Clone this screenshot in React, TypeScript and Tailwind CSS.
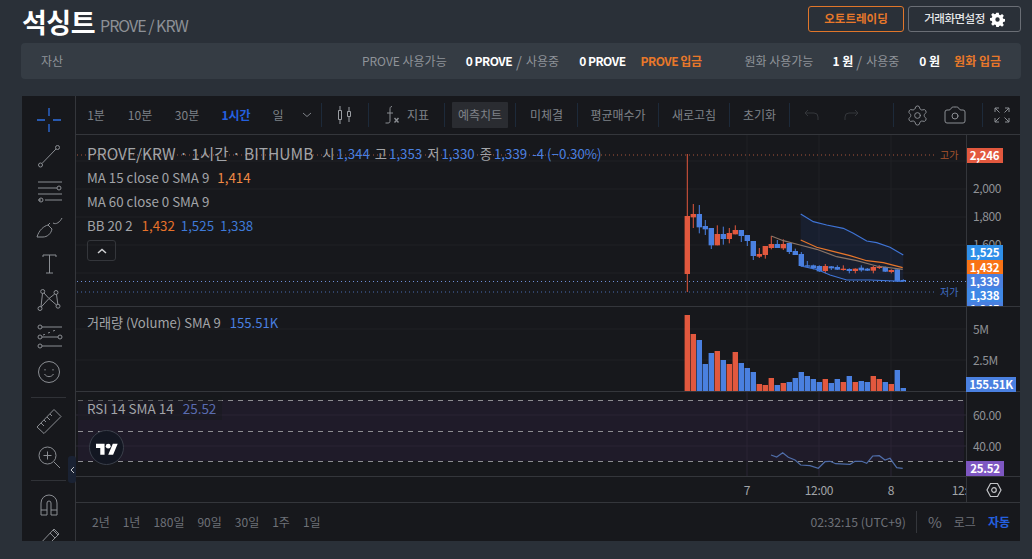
import type { ReactNode } from 'react';
import { Camera, Settings } from 'lucide-react';

const RED = '#e2583e';
const BLUE = '#4a80e0';

// zoomed reference coords -> page coords
const px = (x: number) => x / 3 + 670;
const py = (y: number) => y / 3 + 140;
const vy = (y: number) => y / 3 + 300;

const toPoints = (pts: number[][], fy: (y: number) => number) =>
  pts.map(([x, y]) => `${px(x).toFixed(1)},${fy(y).toFixed(1)}`).join(' ');

// body top, body bottom, wick top, wick bottom, up?
const candles: [number, number, number, number, boolean][] = [
  [228, 402, 42, 456, true],
  [222, 232, 192, 264, true],
  [222, 262, 195, 280, false],
  [258, 268, 240, 285, false],
  [264, 316, 264, 327, false],
  [282, 316, 256, 316, true],
  [282, 297, 260, 314, false],
  [279, 297, 264, 310, true],
  [270, 283, 256, 283, true],
  [270, 288, 270, 306, false],
  [285, 303, 285, 318, false],
  [303, 348, 303, 360, false],
  [342, 350, 324, 354, true],
  [318, 345, 318, 356, true],
  [312, 324, 288, 328, true],
  [312, 324, 300, 324, false],
  [312, 325, 298, 330, true],
  [309, 336, 309, 342, false],
  [333, 345, 326, 345, false],
  [342, 378, 336, 380, false],
  [376, 380, 363, 380, false],
  [376, 384, 374, 388, false],
  [378, 394, 376, 396, false],
  [378, 393, 372, 400, true],
  [379, 385, 378, 390, false],
  [381, 389, 376, 390, false],
  [386, 390, 376, 392, true],
  [387, 393, 385, 400, false],
  [386, 393, 385, 400, true],
  [383, 391, 376, 395, false],
  [386, 392, 384, 393, false],
  [381, 392, 378, 400, true],
  [380, 384, 376, 387, true],
  [381, 395, 380, 396, false],
  [390, 396, 388, 400, true],
  [388, 424, 388, 424, false],
  [420, 424, 418, 425, false],
];

const volumes: [number, boolean][] = [
  [45, true], [102, true], [120, false], [192, false], [159, false], [153, true], [180, false], [192, true],
  [156, true], [189, false], [204, false], [216, false], [252, true], [255, true], [234, true], [255, false],
  [249, true], [246, false], [234, false], [216, false], [228, false], [237, false], [246, false], [237, true],
  [249, false], [237, false], [246, true], [228, false], [246, true], [243, false], [246, false], [228, true],
  [237, true], [246, false], [252, true], [210, false], [264, false],
];

const bbUpper = [[392, 222], [430, 245], [470, 255], [520, 265], [550, 280], [590, 303], [620, 308], [660, 322], [700, 345]];
const bbBasis = [[392, 300], [440, 322], [480, 332], [540, 347], [590, 362], [640, 368], [698, 383]];
const bbLower = [[392, 378], [440, 388], [480, 405], [530, 420], [600, 420], [700, 424]];
const ma15 = [[304, 288], [340, 302], [390, 315], [440, 328], [500, 350], [560, 362], [620, 378], [698, 388]];
const rsi = [
  [303, 465], [320, 471], [338, 458], [355, 472], [375, 480], [392, 495], [420, 497], [445, 505], [465, 485],
  [480, 484], [497, 491], [540, 493], [555, 484], [575, 484], [590, 490], [608, 468], [628, 467], [645, 480],
  [660, 475], [680, 503], [698, 505],
];

const vGrid = [747, 819, 891];

function ToolIcon({ h, children }: { h: number; children: ReactNode }) {
  return (
    <div className="flex items-center justify-center shrink-0" style={{ height: h }}>
      <svg width="32" height="32" viewBox="0 0 32 32" fill="none" stroke="#8b8e93" strokeWidth="1">
        {children}
      </svg>
    </div>
  );
}

function LeftToolbar() {
  return (
    <div className="relative w-[54px] shrink-0 border-r border-[#34363b] flex flex-col pt-[6px] overflow-hidden">
      <ToolIcon h={36}>
        <path d="M4 16h8M20 16h8M16 4v8M16 20v8" stroke="#2f6fe0" strokeWidth="1.3" />
      </ToolIcon>
      <ToolIcon h={35}>
        <circle cx="7.500" cy="25" r="2" />
        <circle cx="24.500" cy="7.500" r="2" />
        <path d="M9 23.500 23 9" />
      </ToolIcon>
      <ToolIcon h={37}>
        <path d="M5 6h24M5 12h19M5 18h24M5 24h3M12 24h17" />
        <circle cx="26" cy="12" r="2" />
        <circle cx="8" cy="24" r="2" />
      </ToolIcon>
      <ToolIcon h={38}>
        <path d="M4 24C6 17 11 13 15 12l4 4c-1 5-5 8-9 8z" />
        <path d="M15 12l2-2M20 10c3 2 7-1 9-5" />
      </ToolIcon>
      <ToolIcon h={36}>
        <path d="M10 5h13M16.500 5v18M13 23h7M10 5v2M23 5v2" />
      </ToolIcon>
      <ToolIcon h={35}>
        <circle cx="9.700" cy="5.500" r="2" />
        <circle cx="23" cy="6.500" r="2" />
        <circle cx="25" cy="20.200" r="2" />
        <circle cx="7" cy="22.500" r="2" />
        <path d="M8 20.500 9.500 7.500M11 7l5 5.500 5.700-4.500M23.500 8.500l1.300 9.700M16 12.500l7.500 6.500M16 12.500l-7.800 8.500" />
      </ToolIcon>
      <ToolIcon h={36}>
        <circle cx="7" cy="6" r="2" />
        <circle cx="7" cy="16" r="2" />
        <circle cx="27" cy="16" r="2" />
        <circle cx="7" cy="25" r="2" />
        <path d="M9 6h20M9 16h16M9 25h20" />
        <path d="M10 14l3-1M15 12l3-1M20 10l3-1" strokeDasharray="2 2" />
      </ToolIcon>
      <ToolIcon h={34}>
        <circle cx="16" cy="16" r="10.500" />
        <path d="M11.500 18c2 3.500 7 3.500 9 0" />
        <path d="M12 13v1.500M20 13v1.500" />
      </ToolIcon>
      <div className="h-[8px] shrink-0" />
      <div className="h-px mx-[9px] bg-[#303237] shrink-0" />
      <div className="h-[6px] shrink-0" />
      <ToolIcon h={35}>
        <path d="M4 21 21 3.500 28 10.500 11 27.500z" />
        <path d="M8 17l3 3M11 14l2 2M14 11l3 3M17 8l2 2" />
      </ToolIcon>
      <ToolIcon h={35}>
        <circle cx="14.500" cy="14.500" r="8.500" />
        <path d="M21 21l6 6M10.500 14.500h8M14.500 10.500v8" />
      </ToolIcon>
      <div className="h-[6px] shrink-0" />
      <div className="h-px mx-[9px] bg-[#303237] shrink-0" />
      <ToolIcon h={48}>
        <path d="M8 26V14a8 8 0 0 1 16 0v12h-6V14a2 2 0 0 0-4 0v12zM8 21h6M18 21h6" />
      </ToolIcon>
      <ToolIcon h={32}>
        <path d="M5 17 21 0l5 5-16 16H5zM9 13l5 5M17 4l5 5M20 1l5 5" />
      </ToolIcon>
    </div>
  );
}

function Sep() {
  return <div className="w-px h-[24px] bg-[#1d2a3a] shrink-0" />;
}

function TopBtn({ w, children, className = '' }: { w: number; children: ReactNode; className?: string }) {
  return (
    <div className={`flex items-center justify-center shrink-0 ${className}`} style={{ width: w }}>
      {children}
    </div>
  );
}

function TopBar() {
  return (
    <div className="h-[39px] shrink-0 border-b border-[#34363b] flex items-center text-[12px] text-[#7f8288]">
      <TopBtn w={40}>1분</TopBtn>
      <TopBtn w={48}>10분</TopBtn>
      <TopBtn w={46}>30분</TopBtn>
      <TopBtn w={52} className="text-[#2460e0] font-bold">1시간</TopBtn>
      <TopBtn w={32}>일</TopBtn>
      <TopBtn w={26}>
        <svg width="10" height="6" viewBox="0 0 10 6" fill="none" stroke="#7f8288"><path d="M1 1l4 3.500L9 1" /></svg>
      </TopBtn>
      <div className="w-[1px]" />
      <Sep />
      <TopBtn w={46}>
        <svg width="18" height="20" viewBox="0 0 18 20" fill="none" stroke="#9a9da2">
          <path d="M2.500 5.500h3v9h-3zM4 1v4.500M4 14.500V19M11.500 6.500h3v5h-3zM13 2v4.500M13 11.500V17" />
        </svg>
      </TopBtn>
      <Sep />
      <TopBtn w={75}>
        <svg width="17" height="20" viewBox="0 0 17 20" fill="none" stroke="#8b8e93" className="mr-[6px]">
          <path d="M8 1.500C6 1.500 6 3 6 5v10c0 2 0 3-2 3H1.500M3 8h6" />
          <path d="M10.500 13l4 4.500M14.500 13l-4 4.500" strokeWidth="1.400" />
        </svg>
        지표
      </TopBtn>
      <Sep />
      <div className="w-[7px] shrink-0" />
      <div className="w-[56px] h-[26px] shrink-0 bg-[#2a2c31] rounded-[1px] flex items-center justify-center">예측치트</div>
      <div className="w-[7px] shrink-0" />
      <Sep />
      <TopBtn w={61}>미체결</TopBtn>
      <Sep />
      <TopBtn w={80}>평균매수가</TopBtn>
      <Sep />
      <TopBtn w={70}>새로고침</TopBtn>
      <Sep />
      <TopBtn w={59}>초기화</TopBtn>
      <Sep />
      <TopBtn w={43}>
        <svg width="16" height="12" viewBox="0 0 16 12" fill="none" stroke="#34363b"><path d="M4 1 1 4l3 3M1 4h9a4 4 0 0 1 4 4v3" /></svg>
      </TopBtn>
      <TopBtn w={36}>
        <svg width="16" height="12" viewBox="0 0 16 12" fill="none" stroke="#34363b"><path d="m12 1 3 3-3 3M15 4H6a4 4 0 0 0-4 4v3" /></svg>
      </TopBtn>
      <div className="w-[24px] shrink-0" />
      <Sep />
      <TopBtn w={46}>
        <Settings size={23} strokeWidth={1} color="#8b8e93" />
      </TopBtn>
      <TopBtn w={30}>
        <Camera size={24} strokeWidth={1} color="#8b8e93" />
      </TopBtn>
      <div className="w-[12px] shrink-0" />
      <Sep />
      <div className="flex-1 flex items-center justify-center">
        <svg width="16" height="16" viewBox="0 0 16 16" fill="none" stroke="#8b8e93">
          <path d="M1 5V1h4M1 1l4.500 4.500M11 1h4v4M15 1l-4.500 4.500M1 11v4h4M1 15l4.500-4.500M11 15h4v-4M15 15l-4.500-4.500" />
        </svg>
      </div>
    </div>
  );
}

function AxisLabel({ y, children }: { y: number; children: ReactNode }) {
  return (
    <span className="absolute left-[6px] text-[12px] leading-[14px] tracking-[-0.4px] text-[#8f9196]" style={{ top: y - 7 }}>
      {children}
    </span>
  );
}

function Badge({ y, w, bg, children }: { y: number; w: number; bg: string; children: ReactNode }) {
  return (
    <span
      className="absolute left-[-1px] h-[14.500px] flex items-center justify-center text-[11.500px] font-semibold tracking-[-0.3px] text-white"
      style={{ top: y, width: w, background: bg }}
    >
      {children}
    </span>
  );
}

function MainPane() {
  const bandPts = toPoints([...bbUpper, ...[...bbLower].reverse()], py);
  return (
    <div className="h-[172px] shrink-0 flex border-b border-[#34363b]">
      <div className="relative flex-1">
        <svg className="absolute inset-0" width="890" height="172" viewBox="76 135 890 172">
          {[161, 189, 217, 245, 273].map((y) => (
            <line key={y} x1="76" x2="966" y1={y} y2={y} stroke="#202125" />
          ))}
          {vGrid.map((x) => (
            <line key={x} x1={x} x2={x} y1="135" y2="306" stroke="#202125" />
          ))}
          <line x1="77" x2="935" y1="155" y2="155" stroke="#a8553a" strokeDasharray="1 3" />
          <line x1="77" x2="966" y1="281.500" y2="281.500" stroke="#6f8fd8" strokeDasharray="1 3" />
          <line x1="77" x2="935" y1="292" y2="292" stroke="#4a6cb0" strokeDasharray="1 3" />
          <polygon points={bandPts} fill="#1f3a78" fillOpacity="0.22" />
          {candles.map(([t, b, wt, wb, up], i) => {
            const cx = 687.300 + 6 * i;
            const c = up ? RED : BLUE;
            return (
              <g key={i}>
                <line x1={cx} x2={cx} y1={py(wt)} y2={py(wb)} stroke={c} strokeWidth="1" />
                <rect x={cx - 2.700} y={py(t)} width="5.400" height={(b - t) / 3} fill={c} />
              </g>
            );
          })}
          <polyline points={toPoints(bbUpper, py)} fill="none" stroke="#3f74d6" strokeWidth="1.200" />
          <polyline points={toPoints(bbLower, py)} fill="none" stroke="#3f74d6" strokeWidth="1.200" />
          <polyline points={toPoints(ma15, py)} fill="none" stroke="#8a7466" strokeWidth="1.200" />
          <polyline points={toPoints(bbBasis, py)} fill="none" stroke="#e8762a" strokeWidth="1.200" />
        </svg>
        <div className="absolute left-[11px] top-[7px] flex flex-col text-[#a2a4a8] text-[13.300px]">
          <div className="h-[24px] flex items-center whitespace-nowrap">
            <span className="text-[15.500px] mr-[9px]">PROVE/KRW · 1시간 · BITHUMB</span>
            <span>시</span><span className="text-[#4a80e0] ml-[2px] mr-[5px]">1,344</span>
            <span>고</span><span className="text-[#4a80e0] ml-[2px] mr-[5px]">1,353</span>
            <span>저</span><span className="text-[#4a80e0] ml-[2px] mr-[5px]">1,330</span>
            <span>종</span><span className="text-[#4a80e0] ml-[2px] mr-[5px]">1,339</span>
            <span className="text-[#4a80e0]">-4 (−0.30%)</span>
          </div>
          <div className="h-[24px] flex items-center whitespace-nowrap">
            MA 15 close 0 SMA 9<span className="text-[#f08a45] ml-[8px]">1,414</span>
          </div>
          <div className="h-[24px] flex items-center whitespace-nowrap">MA 60 close 0 SMA 9</div>
          <div className="h-[24px] flex items-center whitespace-nowrap">
            BB 20 2<span className="text-[#e8722a] ml-[9px]">1,432</span>
            <span className="text-[#3f7ad8] ml-[6px]">1,525</span>
            <span className="text-[#3f7ad8] ml-[6px]">1,338</span>
          </div>
          <div className="mt-[2px] w-[29px] h-[21px] border border-[#34363b] rounded-[3px] flex items-center justify-center">
            <svg width="10" height="6" viewBox="0 0 10 6" fill="none" stroke="#d0d1d4" strokeWidth="1.500"><path d="M1 5l4-3.500L9 5" /></svg>
          </div>
        </div>
        <span className="absolute left-[864px] top-[13px] text-[10px] leading-[14px] text-[#a8552e]">고가</span>
        <span className="absolute left-[864px] top-[150px] text-[10px] leading-[14px] text-[#3f6fc8]">저가</span>
      </div>
      <div className="relative w-[54px] shrink-0 border-l border-[#34363b] overflow-hidden">
        <AxisLabel y={53}>2,000</AxisLabel>
        <AxisLabel y={81}>1,800</AxisLabel>
        <AxisLabel y={109}>1,600</AxisLabel>
        <Badge y={13} w={37} bg="#e2583e">2,246</Badge>
        <Badge y={110} w={37} bg="#2f8fe8">1,525</Badge>
        <Badge y={125} w={37} bg="#f97316">1,432</Badge>
        <Badge y={139} w={37} bg="#4a80e0">1,339</Badge>
        <Badge y={153} w={37} bg="#3f88e6">1,338</Badge>
        <Badge y={167} w={37} bg="#4a80e0">1,245</Badge>
      </div>
    </div>
  );
}

function VolumePane() {
  return (
    <div className="h-[85px] shrink-0 flex border-b border-[#34363b]">
      <div className="relative flex-1">
        <svg className="absolute inset-0" width="890" height="84" viewBox="76 307 890 84">
          {[329, 360].map((y) => (
            <line key={y} x1="76" x2="966" y1={y} y2={y} stroke="#202125" />
          ))}
          {vGrid.map((x) => (
            <line key={x} x1={x} x2={x} y1="307" y2="391" stroke="#202125" />
          ))}
          {volumes.map(([t, up], i) => (
            <rect key={i} x={687.300 + 6 * i - 2.700} y={vy(t)} width="5.400" height={(273 - t) / 3} fill={up ? RED : BLUE} />
          ))}
        </svg>
        <div className="absolute left-[11px] top-[4px] h-[24px] flex items-center text-[13.100px] text-[#a2a4a8] whitespace-nowrap">
          거래량 (Volume) SMA 9<span className="text-[#4a80e0] ml-[9px]">155.51K</span>
        </div>
      </div>
      <div className="relative w-[54px] shrink-0 border-l border-[#34363b]">
        <AxisLabel y={22}>5M</AxisLabel>
        <AxisLabel y={53}>2.5M</AxisLabel>
        <Badge y={70} w={50} bg="#4a80e0">155.51K</Badge>
      </div>
    </div>
  );
}

function RsiPane() {
  return (
    <div className="h-[85px] shrink-0 flex border-b border-[#34363b]">
      <div className="relative flex-1">
        <svg className="absolute inset-0" width="890" height="84" viewBox="76 392 890 84">
          <rect x="78" y="400" width="886" height="61" fill="#1f1b29" />
          {[415, 446].map((y) => (
            <line key={y} x1="76" x2="966" y1={y} y2={y} stroke="#2a2535" />
          ))}
          {vGrid.map((x) => (
            <line key={x} x1={x} x2={x} y1="392" y2="476" stroke="#2a2535" />
          ))}
          {[400.500, 431.500, 461.500].map((y) => (
            <line key={y} x1="78" x2="964" y1={y} y2={y} stroke="#8e8e92" strokeDasharray="5 5" />
          ))}
          <polyline points={toPoints(rsi, vy)} fill="none" stroke="#4f6da8" strokeWidth="1.200" />
        </svg>
        <div className="absolute left-[2px] top-[4px] h-[24px] pl-[9px] pr-[6px] flex items-center text-[13.500px] text-[#a2a4a8] whitespace-nowrap bg-[#17181c]/40">
          RSI 14 SMA 14<span className="text-[#5a6cb0] ml-[9px]">25.52</span>
        </div>
        <div className="absolute left-[13px] top-[38px] w-[35px] h-[35px] rounded-full bg-[#131722] border border-[#3a3f4a] flex items-center justify-center">
          <svg width="22" height="14" viewBox="0 0 36 22" fill="#ffffff">
            <path d="M14 22H7V11H0V4h14v18zM28 22h-8l7.500-18h8L28 22z" />
            <circle cx="20" cy="8" r="4" />
          </svg>
        </div>
      </div>
      <div className="relative w-[54px] shrink-0 border-l border-[#34363b]">
        <AxisLabel y={23}>60.00</AxisLabel>
        <AxisLabel y={54}>40.00</AxisLabel>
        <Badge y={69} w={38} bg="#7e57c2">25.52</Badge>
      </div>
    </div>
  );
}

function TimeAxis() {
  const labels = [
    { x: 747 - 76, t: '7' },
    { x: 819 - 76, t: '12:00' },
    { x: 891 - 76, t: '8' },
    { x: 966 - 76, t: '12:00' },
  ];
  return (
    <div className="h-[26px] shrink-0 flex border-b border-[#34363b]">
      <div className="relative flex-1 overflow-hidden">
        {labels.map((l) => (
          <span
            key={l.x}
            className="absolute top-[5px] -translate-x-1/2 text-[12px] leading-[16px] tracking-[-0.3px] text-[#a2a4a8]"
            style={{ left: l.x }}
          >
            {l.t}
          </span>
        ))}
      </div>
      <div className="w-[54px] shrink-0 border-l border-[#34363b] flex items-center justify-center">
        <svg width="16" height="16" viewBox="0 0 16 16" fill="none" stroke="#c4c5c8" strokeWidth="1.200">
          <path d="M4.500 1.500h7L15 8l-3.500 6.500h-7L1 8z" />
          <circle cx="8" cy="8" r="2.300" />
        </svg>
      </div>
    </div>
  );
}

function BottomBar() {
  return (
    <div className="flex-1 flex items-center pl-[16px] pr-[10px] text-[12px] text-[#6e7178]">
      <div className="flex gap-[13px]">
        {['2년', '1년', '180일', '90일', '30일', '1주', '1일'].map((r) => (
          <span key={r}>{r}</span>
        ))}
      </div>
      <div className="ml-auto flex items-center">
        <span className="text-[12.200px] mr-[10px]">02:32:15 (UTC+9)</span>
        <div className="w-px h-[22px] bg-[#34363b] mr-[11px]" />
        <span className="text-[15px] mr-[12px]">%</span>
        <span className="mr-[12px]">로그</span>
        <span className="text-[#2460e0] font-bold">자동</span>
      </div>
    </div>
  );
}

export default function App() {
  return (
    <div
      className="w-[1032px] h-[559px] overflow-hidden bg-[#2a3038]"
      style={{ fontFamily: '"Noto Sans CJK KR", "Noto Sans", sans-serif' }}
    >
      <div className="h-[43px] pl-[22px] pr-[11px] flex items-center">
        <h1 className="text-[27px] font-bold text-white leading-none tracking-[-0.5px]">석싱트</h1>
        <span className="ml-[5px] mt-[7px] text-[16px] text-[#8d9096] tracking-[-1px]">PROVE / KRW</span>
        <div className="ml-auto flex gap-[4px] -mt-[5px]">
          <button className="w-[96px] h-[26px] border border-[#e0762a] rounded-[3px] text-[11.500px] font-semibold text-[#e8782a]">
            오토트레이딩
          </button>
          <button className="w-[113px] h-[26px] border border-[#6a6e75] rounded-[3px] text-[11.500px] font-medium text-[#e4e5e7] tracking-[-0.5px] flex items-center justify-center gap-[5px]">
            거래화면설정
            <svg width="15" height="15" viewBox="0 0 24 24" fill="#ffffff">
              <path d="M10 1h4l.6 3.200 2 .8L19.300 3.200l2.800 2.800-1.800 2.700.8 2 3.200.6v4l-3.200.6-.8 2 1.800 2.700-2.800 2.800-2.700-1.800-2 .8L14 24h-4l-.6-3.200-2-.8-2.700 1.800L1.900 19l1.800-2.700-.8-2L-.3 13.700v-4l3.200-.6.8-2L1.900 4.400l2.800-2.800 2.700 1.800 2-.8zM12 8.500a3.500 3.500 0 1 0 0 7 3.500 3.500 0 0 0 0-7z" fillRule="evenodd" />
            </svg>
          </button>
        </div>
      </div>

      <div className="mx-[21px] mr-[11px] h-[36px] bg-[#353c44] rounded-[4px] flex items-center pl-[20px] text-[12px] text-[#8f9399] whitespace-nowrap">
        <span>자산</span>
        <span className="ml-auto">PROVE 사용가능</span>
        <span className="ml-[19px] font-semibold text-white tracking-[-0.5px]">0 PROVE</span>
        <span className="ml-[4px] text-[15px] leading-none">/</span>
        <span className="ml-[4px]">사용중</span>
        <span className="ml-[20px] font-semibold text-white tracking-[-0.5px]">0 PROVE</span>
        <span className="ml-[15px] font-semibold text-[#e8782a] tracking-[-0.5px]">PROVE 입금</span>
        <span className="ml-[43px]">원화 사용가능</span>
        <span className="ml-[19px] font-semibold text-white">1 원</span>
        <span className="ml-[3px] text-[15px] leading-none">/</span>
        <span className="ml-[4px]">사용중</span>
        <span className="ml-[20px] font-semibold text-white">0 원</span>
        <span className="ml-[14px] mr-[20px] font-semibold text-[#e8782a]">원화 입금</span>
      </div>

      <div className="relative mt-[17px] ml-[22px] mr-[12px] h-[445px] bg-[#17181c] flex">
        <LeftToolbar />
        <div className="flex-1 min-w-0 flex flex-col">
          <TopBar />
          <MainPane />
          <VolumePane />
          <RsiPane />
          <TimeAxis />
          <BottomBar />
        </div>
        {/* collapse handle for the drawing toolbar */}
        <div className="absolute left-[46px] top-[360px] w-[8px] h-[27px] rounded-[3px] bg-[#1a2233] flex items-center justify-center">
          <svg width="5" height="8" viewBox="0 0 5 8" fill="none" stroke="#c4c5c8"><path d="M4 1 1 4l3 3" /></svg>
        </div>
      </div>
    </div>
  );
}
